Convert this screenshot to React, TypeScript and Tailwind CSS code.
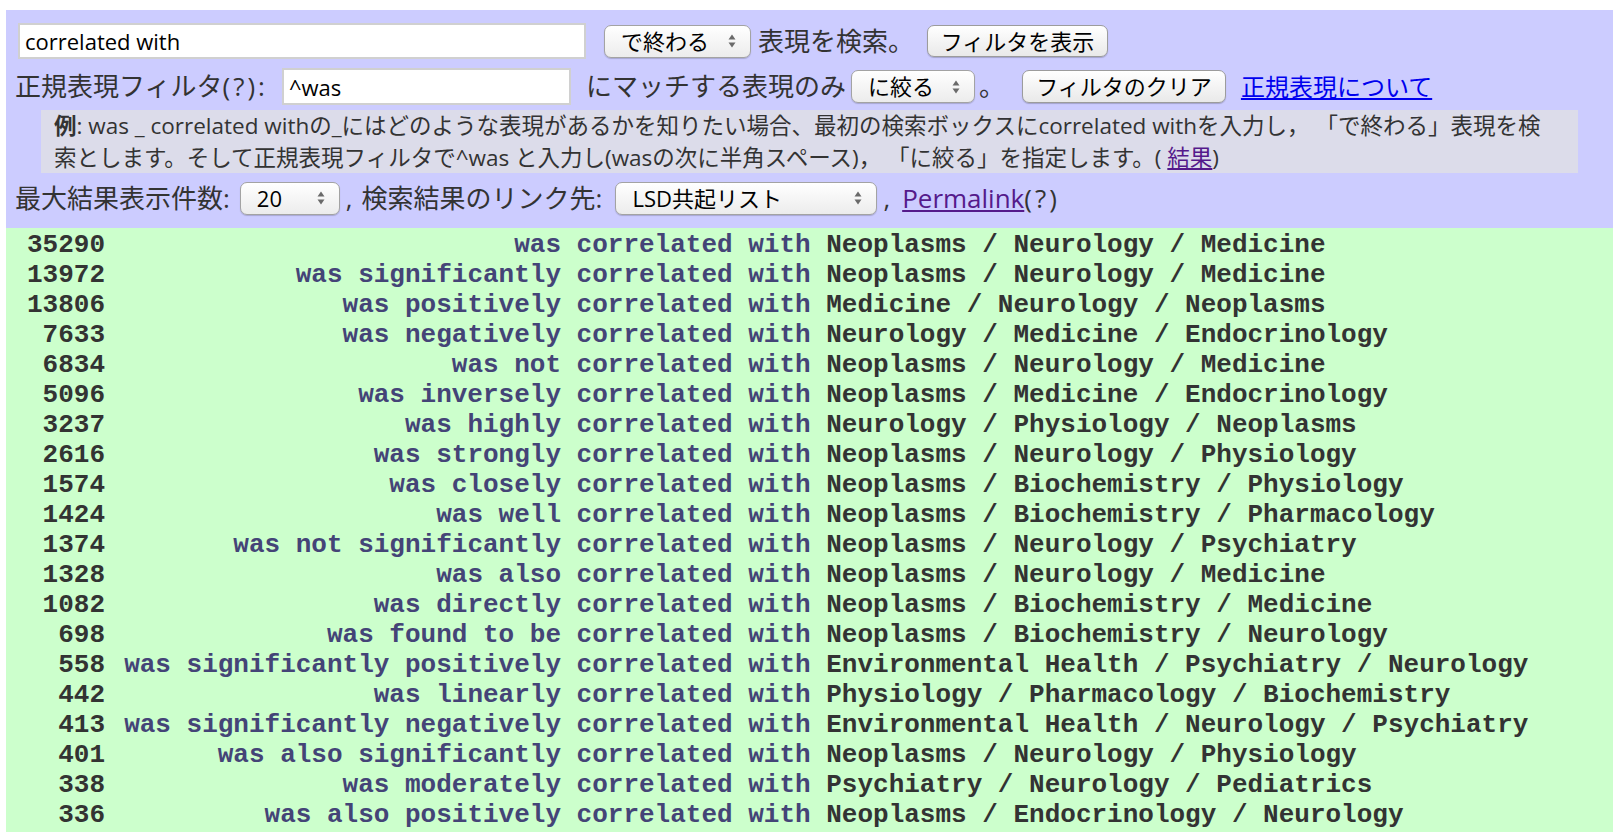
const ROWS: [number, string, string][] = [
  [35290, "was", "Neoplasms / Neurology / Medicine"],
  [13972, "was significantly", "Neoplasms / Neurology / Medicine"],
  [13806, "was positively", "Medicine / Neurology / Neoplasms"],
  [7633, "was negatively", "Neurology / Medicine / Endocrinology"],
  [6834, "was not", "Neoplasms / Neurology / Medicine"],
  [5096, "was inversely", "Neoplasms / Medicine / Endocrinology"],
  [3237, "was highly", "Neurology / Physiology / Neoplasms"],
  [2616, "was strongly", "Neoplasms / Neurology / Physiology"],
  [1574, "was closely", "Neoplasms / Biochemistry / Physiology"],
  [1424, "was well", "Neoplasms / Biochemistry / Pharmacology"],
  [1374, "was not significantly", "Neoplasms / Neurology / Psychiatry"],
  [1328, "was also", "Neoplasms / Neurology / Medicine"],
  [1082, "was directly", "Neoplasms / Biochemistry / Medicine"],
  [698, "was found to be", "Neoplasms / Biochemistry / Neurology"],
  [558, "was significantly positively", "Environmental Health / Psychiatry / Neurology"],
  [442, "was linearly", "Physiology / Pharmacology / Biochemistry"],
  [413, "was significantly negatively", "Environmental Health / Neurology / Psychiatry"],
  [401, "was also significantly", "Neoplasms / Neurology / Physiology"],
  [338, "was moderately", "Psychiatry / Neurology / Pediatrics"],
  [336, "was also positively", "Neoplasms / Endocrinology / Neurology"],
];

function Arrows() {
  return (
    <svg width="8" height="16" viewBox="0 0 8 16" className="shrink-0">
      <path d="M4 1.5 L7.5 6.5 H0.5 Z" fill="#6a6a6a" />
      <path d="M4 14.5 L7.5 9.5 H0.5 Z" fill="#6a6a6a" />
    </svg>
  );
}

function Select({ label, className }: { label: string; className: string }) {
  return (
    <div
      className={`flex shrink-0 items-center justify-between rounded-[7px] border border-[#a3a3a3] bg-linear-to-b from-white to-[#ececec] pl-[16px] pr-[14px] text-[22px] text-black shadow-[0_1px_1px_rgba(0,0,0,0.18)] ${className}`}
    >
      <span>{label}</span>
      <Arrows />
    </div>
  );
}

function Button({ label, className }: { label: string; className: string }) {
  return (
    <button
      type="button"
      className={`flex shrink-0 items-center justify-center rounded-[7px] border border-[#9c9c9c] bg-linear-to-b from-white to-[#e9e9e9] text-[22px] text-black shadow-[0_1px_1px_rgba(0,0,0,0.2)] ${className}`}
    >
      {label}
    </button>
  );
}

export default function App() {
  return (
    <div className="min-h-[840px] bg-white pl-[6px] pr-[7px] pt-[10px]">
      <div className="bg-[#ccccff] pb-[12px] pl-[9px] pt-[11px] font-['Open_Sans','Noto_Sans_CJK_JP',sans-serif] text-[26px] text-[#333]">
        <div className="flex h-[40px] items-center whitespace-nowrap">
          <input
            readOnly
            value="correlated with"
            className="ml-[3px] h-[36px] w-[568px] shrink-0 border-2 border-[#d0d0d0] bg-white pl-[5px] text-[22px] text-black outline-none"
          />
          <Select label="で終わる" className="ml-[18px] h-[33px] w-[147px]" />
          <span className="ml-[7px]">表現を検索。</span>
          <Button label="フィルタを表示" className="ml-[13px] h-[32px] w-[181px]" />
        </div>

        <div className="mt-[5px] flex h-[41px] items-center whitespace-nowrap">
          <span>
            正規表現フィルタ<span className="tracking-[3px]">(?):</span>
          </span>
          <input
            readOnly
            value="^was"
            className="ml-[14px] h-[37px] w-[289px] shrink-0 border-2 border-[#d0d0d0] bg-white pl-[5px] text-[22px] text-black outline-none"
          />
          <span className="ml-[15px]">にマッチする表現のみ</span>
          <Select label="に絞る" className="ml-[5px] h-[33px] w-[124px]" />
          <span className="ml-[4px]">。</span>
          <Button label="フィルタのクリア" className="ml-[17px] h-[33px] w-[204px]" />
          <a href="#" className="ml-[15px] text-[24px] text-[#0000ee] underline">
            正規表現について
          </a>
        </div>

        <div className="ml-[26px] mt-[3px] h-[63px] w-[1537px] bg-[#dcdcea] pl-[13px] text-[22.5px] leading-[31.5px] text-[#333]">
          <b>例</b>: was _ correlated withの_にはどのような表現があるかを知りたい場合、最初の検索ボックスにcorrelated withを入力し， 「で終わる」表現を検
          <br />
          索とします。そして正規表現フィルタで^was と入力し(wasの次に半角スペース)， 「に絞る」を指定します。({" "}
          <a href="#" className="text-[#551a8b] underline">
            結果
          </a>
          )
        </div>

        <div className="mt-[7px] flex h-[36px] items-center whitespace-nowrap">
          <span>最大結果表示件数:</span>
          <Select label="20" className="ml-[10px] h-[33px] w-[100px]" />
          <span className="ml-[6px]">,</span>
          <span className="ml-[9px]">検索結果のリンク先:</span>
          <Select label="LSD共起リスト" className="ml-[13px] h-[33px] w-[262px]" />
          <span className="ml-[6px]">,</span>
          <a href="#" className="ml-[12px] text-[#551a8b] underline">
            Permalink
          </a>
          <span className="tracking-[3px]">(?)</span>
        </div>
      </div>

      <div className="bg-[#ccffcc] py-[2px] font-['Liberation_Mono',monospace] text-[26px] font-bold leading-[30px]">
        {ROWS.map(([count, phrase, fields]) => (
          <div key={count} className="flex h-[30px] whitespace-pre">
            <span className="w-[99px] shrink-0 text-right text-[#333]">{count}</span>
            <span className="ml-[19px] w-[437px] shrink-0 text-right text-[#444477]">{phrase}</span>
            <span className="ml-[15.6px] text-[#444477]">correlated with </span>
            <span className="text-[#333]">{fields}</span>
          </div>
        ))}
      </div>
    </div>
  );
}
